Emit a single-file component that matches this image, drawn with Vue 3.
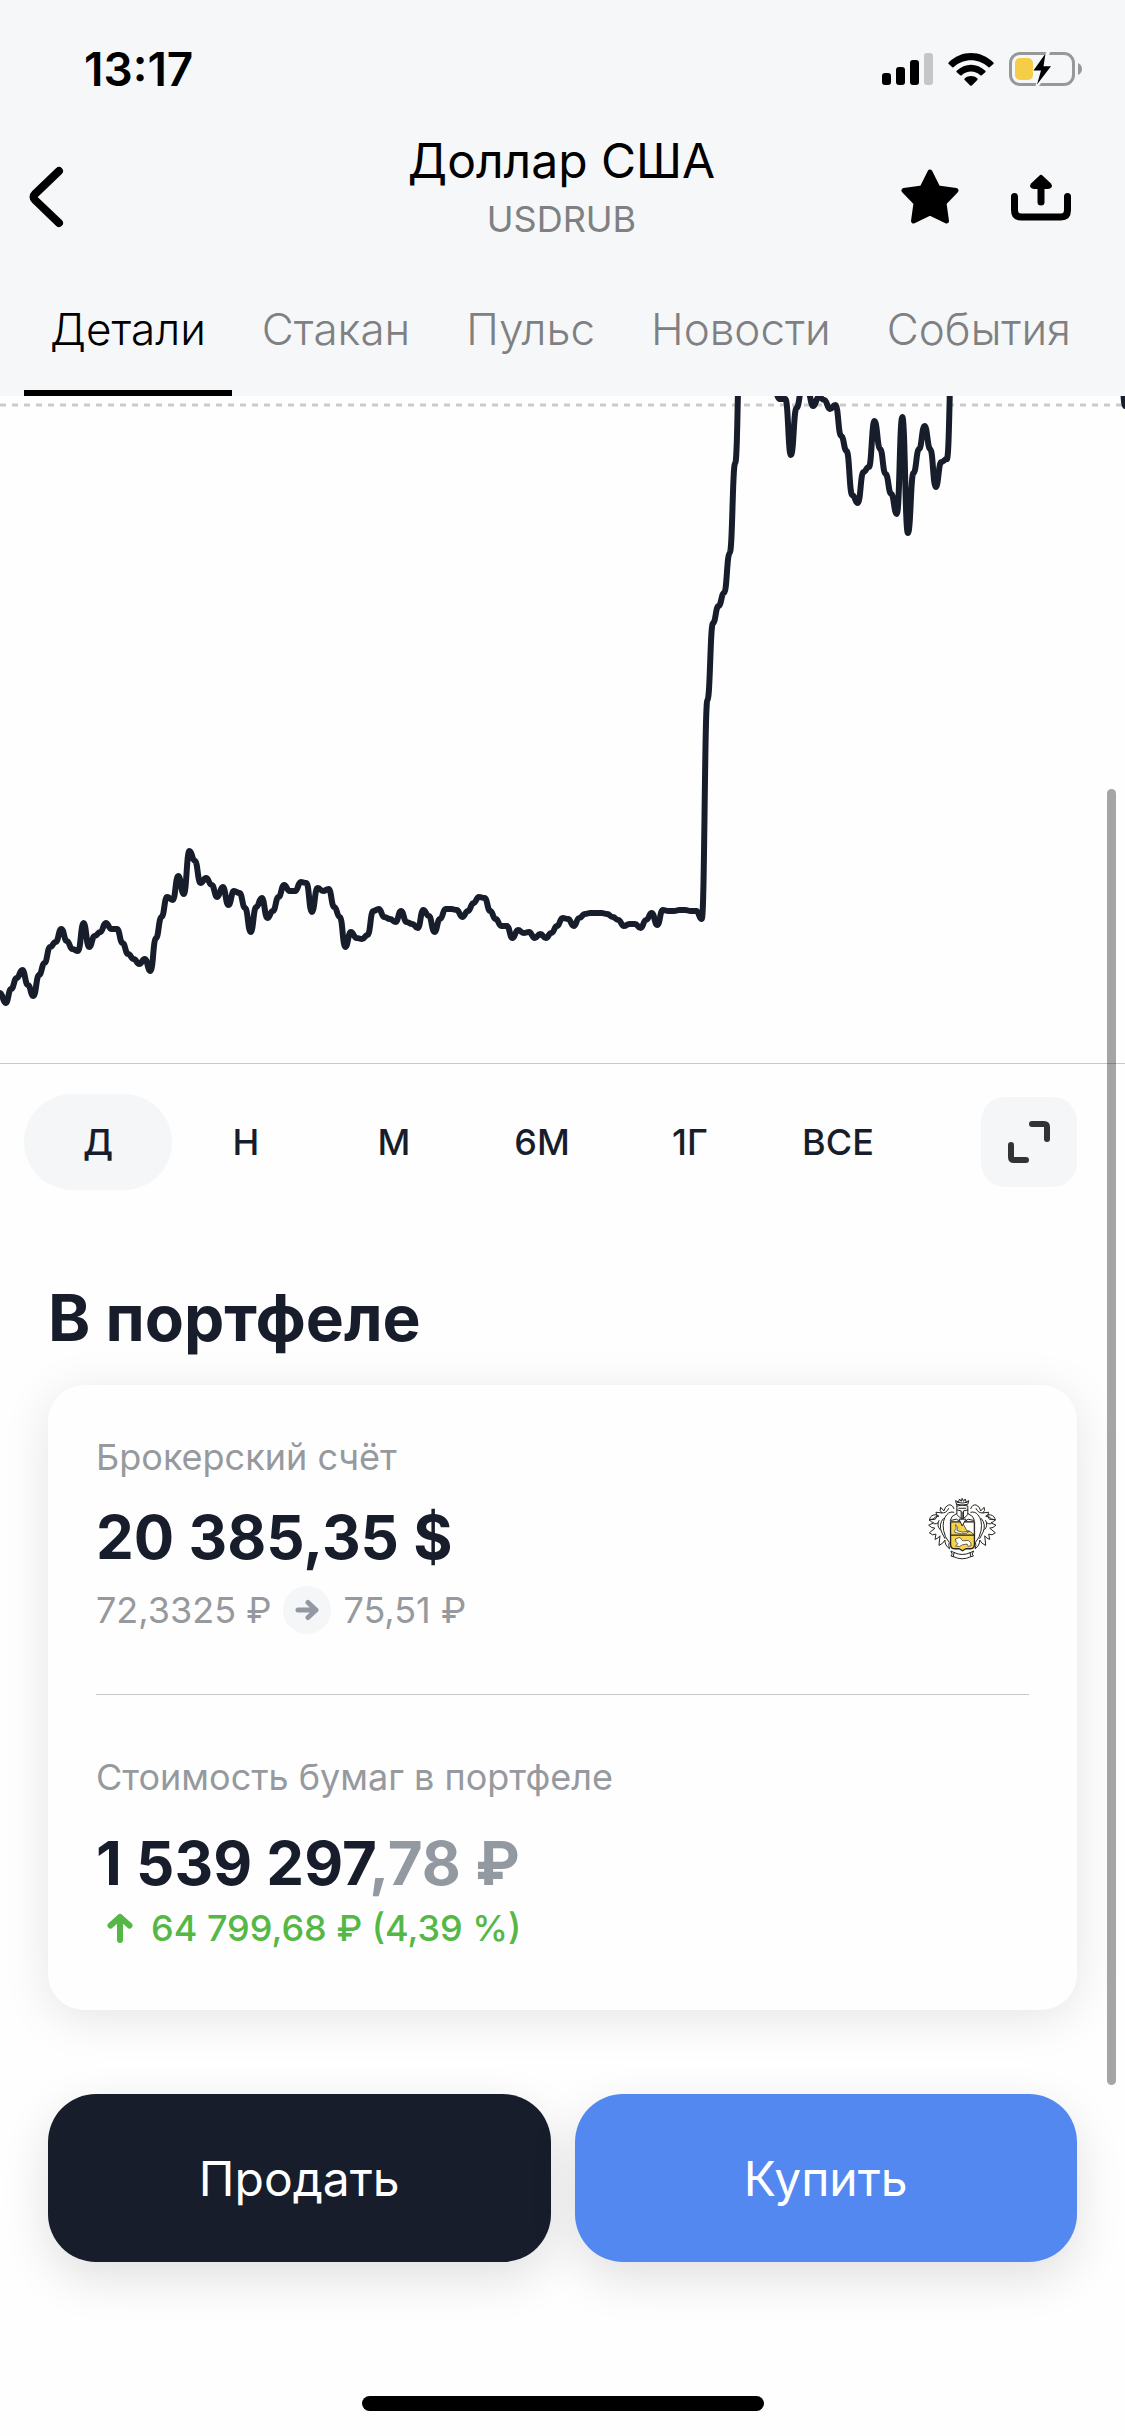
<template>
  <div class="screen">
    <header class="top">
      <div class="status">
        <time class="clock">13:17</time>
        <div class="status-icons">
          <svg width="51" height="32" viewBox="0 0 51 32" aria-hidden="true">
            <rect x="0" y="20" width="9" height="12" rx="3" />
            <rect x="14" y="14" width="9" height="18" rx="3" />
            <rect x="28" y="7" width="9" height="25" rx="3" />
            <rect x="42" y="0" width="9" height="32" rx="3" fill="#c5c6c8" />
          </svg>
          <svg width="46" height="33" viewBox="0 0 46 33" aria-hidden="true">
            <path d="M0.6 9.6C13-3.2 33-3.2 45.4 9.6Q46 10.4 45.3 11.1L41.6 14.2Q40.9 14.8 40.2 14.1C30.5 5 15.5 5 5.8 14.1Q5.1 14.8 4.4 14.2L0.7 11.1Q0 10.4 0.6 9.6Z" />
            <path d="M8.7 17.8C17 9.7 29 9.7 37.3 17.8Q38 18.5 37.3 19.2L33.8 22.3Q33 22.9 32.3 22.2C27 17.3 19 17.3 13.7 22.2Q13 22.9 12.2 22.3L8.7 19.2Q8 18.5 8.7 17.8Z" />
            <path d="M16.8 25.3C20.3 22.2 25.7 22.2 29.2 25.3Q30 26.1 29.3 26.9L23.8 32.4Q23 33.1 22.2 32.4L16.7 26.9Q16 26.1 16.8 25.3Z" />
          </svg>
          <svg width="73" height="34" viewBox="0 0 73 34" aria-hidden="true">
            <rect x="1.5" y="1.5" width="63" height="31" rx="9.5" fill="none" stroke="#97989a" stroke-width="3" />
            <path d="M69 11Q73 13 73 17T69 23Z" fill="#97989a" />
            <rect x="6" y="6" width="18" height="22" rx="5" fill="#f6cd46" />
            <path d="M37.5 0L23 19.5H30.5L26.5 34H30L44 13.5H37L41 0Z" fill="#f6f7f9" />
            <path d="M36.5 1.5L24.5 18.5H32L28 32.5L42 14.2H34.5Z" />
          </svg>
        </div>
      </div>

      <div class="nav">
        <button class="icon-btn" type="button" aria-label="Назад">
          <svg width="36" height="62" viewBox="0 0 36 62" fill="none" stroke="#000" stroke-width="8" stroke-linecap="round" stroke-linejoin="round">
            <path d="M31 5L7 28Q4 31 7 34L31 57" />
          </svg>
        </button>
        <div class="nav-title">
          <h1>Доллар США</h1>
          <p>USDRUB</p>
        </div>
        <div class="nav-actions">
          <button class="icon-btn" type="button" aria-label="В избранное">
            <svg width="58" height="56" viewBox="0 0 58 56">
              <path d="M29 3L37 19L55 21.5L43 34L45.5 52L29 44L12.5 52L15 34L3 21.5L21 19Z" stroke="#000" stroke-width="5" stroke-linejoin="round" />
            </svg>
          </button>
          <button class="icon-btn" type="button" aria-label="Поделиться">
            <svg width="60" height="50" viewBox="0 0 60 50" fill="none" stroke="#000" stroke-width="7" stroke-linecap="round" stroke-linejoin="round">
              <path d="M3.5 24.5V38Q3.5 45 10 45H50Q56.5 45 56.5 38V24.5" />
              <path d="M30 8V30" />
              <path d="M30 5.5L38 13Q39 14.5 37 14.5H23Q21 14.5 22 13Z" fill="#000" stroke-width="5" />
            </svg>
          </button>
        </div>
      </div>

      <nav class="tabs">
        <button
          v-for="tab in tabs"
          :key="tab"
          class="tab"
          :class="{ active: tab === activeTab }"
          type="button"
          @click="activeTab = tab"
        >
          {{ tab }}
        </button>
      </nav>
    </header>

    <main>
      <svg class="chart" viewBox="0 0 1125 667" role="img" aria-label="График USDRUB">
        <line x1="0" y1="9" x2="1125" y2="9" stroke="#cbcbcd" stroke-width="3" stroke-dasharray="6 6" />
        <path
          v-for="(line, i) in chartLines"
          :key="i"
          :d="line"
          fill="none"
          stroke="#171d2a"
          stroke-width="6"
          stroke-linecap="round"
          stroke-linejoin="round"
        />
      </svg>

      <div class="ranges">
        <div class="range-list">
          <button
            v-for="range in ranges"
            :key="range"
            class="range"
            :class="{ active: range === activeRange }"
            type="button"
            @click="activeRange = range"
          >
            {{ range }}
          </button>
        </div>
        <button class="expand" type="button" aria-label="Развернуть график">
          <svg width="42" height="42" viewBox="0 0 42 42" fill="none" stroke="#333" stroke-width="6" stroke-linecap="round" stroke-linejoin="round">
            <path d="M24 3H36Q39 3 39 6V18" />
            <path d="M3 24V36Q3 39 6 39H18" />
          </svg>
        </button>
      </div>

      <section class="portfolio">
        <h2>В портфеле</h2>
        <div class="card">
          <div class="account">
            <div>
              <p class="label">Брокерский счёт</p>
              <p class="amount">20 385,35 $</p>
              <p class="prices">
                <span>72,3325 ₽</span>
                <span class="arrow">
                  <svg width="24" height="22" viewBox="0 0 24 22" fill="none" stroke="#9299a2" stroke-width="5" stroke-linecap="round" stroke-linejoin="round">
                    <path d="M3 11H21M13 3.5L21 11L13 18.5" />
                  </svg>
                </span>
                <span>75,51 ₽</span>
              </p>
            </div>
            <svg class="emblem" viewBox="86 82 208 190" fill="none" stroke="#24221e" stroke-width="3" stroke-linejoin="round" stroke-linecap="round" aria-hidden="true">
              <path d="M172 104L169 93L178 97L181 88L186 95L189 86L193 95L198 88L201 97L209 93L206 104Q189 109 172 104ZM174 98Q189 103 204 98" />
              <path d="M173 109V135Q181 144 189 149Q198 144 206 135V109Q189 104 173 109ZM173 121L186 124V145M206 121L193 124V145M179 116H200M189 128V149" />
              <path d="M172 132Q154 140 153 153L172 149L180 155M207 132Q225 140 226 153L207 149L199 155" />
              <g id="leaf">
                <path d="M164 117Q160 104 148 106Q137 110 134 124L124 113Q119 124 128 130L110 128Q117 141 108 149L90 151Q96 158 103 160L88 167Q96 176 107 176L90 190Q100 200 110 194L107 210Q117 207 122 199L119 228Q132 223 137 212Q137 229 151 238Q147 228 150 219Q136 203 133 183Q128 151 143 135Q151 125 164 128" />
                <path d="M119 153Q111 168 122 180M132 147Q117 165 127 188L137 207M104 163Q112 164 116 160" />
                <path d="M91 151Q90 140 104 136Q114 133 119 140L109 142Q103 150 91 151ZM128 130Q141 132 148 117" />
              </g>
              <use href="#leaf" transform="translate(379 0) scale(-1 1)" />
              <path d="M154 157H226V225Q226 238 212 238H200L190 244L180 238H168Q154 238 154 225Z" fill="#f3d44e" stroke-width="4" />
              <path d="M190 158H225V196Q215 184 204 183Z" fill="#fefefe" stroke-width="2" />
              <path d="M155 197H225" stroke-width="4" />
              <path d="M170 166Q180 172 173 183L190 188L211 185Q204 194 187 193L167 189Q164 182 170 177Z" fill="#fefefe" stroke-width="2" />
              <path d="M170 208L182 204L190 214L207 213Q217 217 216 229L207 231L204 224L190 226L181 231L169 230L176 223L171 217Z" fill="#fefefe" stroke-width="2" />
              <path d="M180 150L189 169L200 150Z" fill="#fefefe" />
              <path d="M166 250Q189 261 213 250L215 262Q189 275 163 262ZM166 250L155 245L159 254L155 260L163 262M213 250L224 245L219 254L223 260L215 262" />
            </svg>
          </div>
          <div class="total">
            <p class="label">Стоимость бумаг в портфеле</p>
            <p class="amount">1 539 297<span class="fraction">,78 ₽</span></p>
            <p class="profit">
              <svg width="26" height="30" viewBox="0 0 26 30" fill="none" stroke="#55b746" stroke-width="6" stroke-linecap="round" stroke-linejoin="round">
                <path d="M13 4V27M3.5 12.5L13 4L22.5 12.5" />
              </svg>
              <span>64 799,68 ₽ (4,39 %)</span>
            </p>
          </div>
        </div>
      </section>
    </main>

    <footer class="trade">
      <button class="trade-btn sell" type="button">Продать</button>
      <button class="trade-btn buy" type="button">Купить</button>
    </footer>

    <div class="home-indicator" />
    <div class="scroll-thumb" />
  </div>
</template>

<script setup>
import { ref } from "vue";

const tabs = ["Детали", "Стакан", "Пульс", "Новости", "События"];
const activeTab = ref("Детали");

const ranges = ["Д", "Н", "М", "6М", "1Г", "ВСЕ"];
const activeRange = ref("Д");

const STEP = 5.57;

// start is the index of the first tick, values are y coordinates in the chart
const series = [
  {
    start: 0,
    values: [
      597, 607, 593, 582, 574, 589, 600, 579, 567, 551, 546,
      533, 545, 553, 555, 527, 551, 540, 536, 527, 533,
      533, 547, 558, 563, 568, 563, 575, 542, 521, 501,
      504, 480, 498, 455, 465, 487, 482, 489, 501, 491,
      509, 495, 497, 512, 536, 511, 502, 522, 515, 501,
      489, 495, 495, 486, 487, 516, 492, 495, 493, 511,
      521, 551, 536, 542, 543, 539, 515, 513, 521, 523,
      526, 515, 526, 528, 532, 514, 520, 536, 523, 513,
      513, 514, 521, 515, 507, 501, 502, 515, 523, 530,
      530, 542, 534, 537, 536, 542, 538, 542, 537, 530,
      522, 523, 530, 522, 518, 517, 517, 517, 518, 521,
      524, 530, 528, 528, 532, 524, 517, 529, 514, 515,
      515, 514, 514, 515, 515, 523, 304, 227, 210, 197,
      157, 67, -80,
    ],
  },
  {
    start: 139,
    values: [
      -6, 3, 3, 59, 12, -7, -5, 10, 1, 4, 13, 9,
      40, 55, 99, 107, 76, 71, 25, 53, 78, 98,
      118, 21, 137, 77, 53, 30, 53, 91, 66, 63, -60,
    ],
  },
  { start: 201, values: [-60, 10] },
];

const toPath = ({ start, values }) => {
  const x = (i) => (start + i) * STEP;
  return values.reduce((d, y, i) => {
    if (i === 0) return `M${x(0).toFixed(1)} ${y}`;
    const mid = ((x(i - 1) + x(i)) / 2).toFixed(1);
    return `${d}C${mid} ${values[i - 1]} ${mid} ${y} ${x(i).toFixed(1)} ${y}`;
  }, "");
};

const chartLines = series.map(toPath);
</script>

<style>
body {
  margin: 0;
  background: #fefefe;
}
</style>

<style scoped>
.screen {
  position: relative;
  padding-bottom: 24px;
  color: #171d2a;
  font-family: Inter, "Liberation Sans", sans-serif;
}

.screen *,
.screen *::before,
.screen *::after {
  box-sizing: border-box;
}

h1,
h2,
p {
  margin: 0;
}

button {
  padding: 0;
  border: 0;
  background: none;
  color: inherit;
  font-family: inherit;
  cursor: pointer;
}

svg {
  display: block;
}

.top {
  background: #f6f7f9;
  color: #000;
}

.status {
  display: flex;
  align-items: center;
  justify-content: space-between;
  height: 132px;
  padding: 6px 43px 0 84px;
}

.clock {
  font-size: 46px;
  font-weight: 600;
}

.status-icons {
  display: flex;
  align-items: center;
  gap: 15px;
}

.nav {
  display: grid;
  grid-template-columns: 1fr auto 1fr;
  align-items: center;
  height: 130px;
  padding: 0 54px 0 28px;
}

.nav-title {
  align-self: start;
  padding-left: 24px;
  text-align: center;
}

.nav-title h1 {
  font-size: 48px;
  font-weight: 400;
  line-height: 58px;
}

.nav-title p {
  color: #7f8082;
  font-size: 36px;
  line-height: 58px;
}

.nav-actions {
  display: flex;
  align-items: center;
  justify-content: flex-end;
  gap: 52px;
}

.tabs {
  display: flex;
  justify-content: space-between;
  height: 134px;
  padding: 0 28px 0 24px;
}

.tab {
  padding: 0 26px;
  border-top: 6px solid transparent;
  border-bottom: 6px solid transparent;
  color: #7f8082;
  font-size: 44px;
  font-weight: 300;
}

.tab.active {
  border-bottom-color: #000;
  color: #000;
}

.chart {
  width: 100%;
  height: auto;
  overflow: hidden;
}

.ranges {
  display: flex;
  align-items: center;
  justify-content: space-between;
  padding: 30px 48px 0 24px;
  border-top: 1px solid #c8c8ca;
}

.range-list {
  display: flex;
}

.range {
  width: 148px;
  height: 96px;
  border-radius: 48px;
  font-size: 36px;
  font-weight: 500;
}

.range.active {
  background: #f4f6f8;
}

.expand {
  display: grid;
  place-items: center;
  width: 96px;
  height: 90px;
  border-radius: 24px;
  background: #f4f6f8;
}

.portfolio {
  padding: 88px 48px 0;
}

.portfolio h2 {
  font-size: 64px;
  font-weight: 700;
  line-height: 80px;
}

.card {
  margin-top: 27px;
  padding: 48px;
  border-radius: 36px;
  background: #fefefe;
  box-shadow: 0 8px 48px rgba(0, 0, 0, 0.1);
}

.account {
  display: flex;
  align-items: center;
  justify-content: space-between;
  padding-bottom: 60px;
  border-bottom: 1px solid #c8c8ca;
}

.label {
  color: #96999d;
  font-size: 36px;
  line-height: 48px;
}

.amount {
  margin-top: 20px;
  font-size: 60px;
  font-weight: 700;
  line-height: 72px;
}

.prices {
  display: flex;
  align-items: center;
  gap: 12px;
  margin-top: 13px;
  color: #96999d;
  font-size: 36px;
  line-height: 48px;
}

.arrow {
  display: grid;
  place-items: center;
  width: 48px;
  height: 48px;
  border-radius: 50%;
  background: #f4f6f8;
}

.emblem {
  width: 69px;
  height: 63px;
  margin: 0 32px 10px 0;
}

.total {
  padding: 58px 0 10px;
}

.total .amount {
  margin-top: 26px;
}

.fraction {
  color: #9299a0;
}

.profit {
  display: flex;
  align-items: center;
  gap: 18px;
  margin-top: 5px;
  padding-left: 11px;
  color: #55b746;
  font-size: 36px;
  font-weight: 500;
  line-height: 48px;
}

.trade {
  display: grid;
  grid-template-columns: 1fr 1fr;
  gap: 24px;
  padding: 84px 48px 0;
}

.trade-btn {
  height: 168px;
  border-radius: 48px;
  color: #fff;
  font-size: 48px;
  font-weight: 400;
  box-shadow: 0 16px 48px rgba(0, 0, 0, 0.12);
}

.sell {
  background: #171d2a;
}

.buy {
  background: #5488f1;
}

.home-indicator {
  width: 402px;
  height: 15px;
  margin: 134px auto 0;
  border-radius: 8px;
  background: #000;
}

.scroll-thumb {
  position: absolute;
  top: 789px;
  right: 9px;
  width: 9px;
  height: 1296px;
  border-radius: 5px;
  background: rgba(0, 0, 0, 0.35);
}
</style>
